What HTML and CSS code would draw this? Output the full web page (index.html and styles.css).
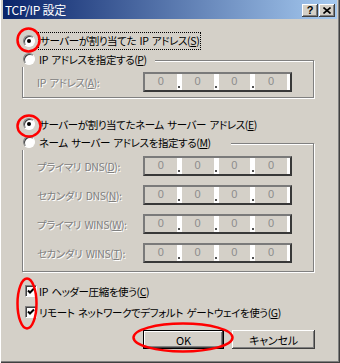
FILE: index.html
```html
<!DOCTYPE html>
<html>
<head>
    <meta charset="utf-8">
    <title>TCP/IP 設定</title>
    <link rel="stylesheet" href="styles.css">
</head>
<body>
    <div class="window">
        <div class="titlebar">
            <span class="title">TCP/IP 設定</span>
            <div class="caption-btns">
                <span class="cap-btn">?</span>
                <span class="cap-btn">
                    <svg width="8" height="7" viewBox="0 0 8 7"><path d="M0.5 0.5 L7.5 6.5 M7.5 0.5 L0.5 6.5" stroke="#000" stroke-width="1.6" fill="none"/></svg>
                </span>
            </div>
        </div>

        <div class="content">
            <div class="opt opt-first">
                <span class="radio on"></span>
                <span class="focus">サーバーが割り当てた IP アドレス(<u>S</u>)</span>
            </div>

            <div class="group group-ip">
                <div class="opt legend">
                    <span class="radio"></span>
                    <span>IP アドレスを指定する(<u>P</u>)</span>
                </div>
                <div class="field-row first">
                    <span class="lbl">IP アドレス(<u>A</u>):</span>
                    <div class="ipbox"><span class="oct">0</span><span class="dot"></span><span class="oct">0</span><span class="dot"></span><span class="oct">0</span><span class="dot"></span><span class="oct">0</span><span class="tail"></span></div>
                </div>
            </div>

            <div class="opt opt-dns">
                <span class="radio on"></span>
                <span>サーバーが割り当てたネーム サーバー アドレス(<u>E</u>)</span>
            </div>

            <div class="group group-dns">
                <div class="opt legend wide">
                    <span class="radio"></span>
                    <span>ネーム サーバー アドレスを指定する(<u>M</u>)</span>
                </div>
                <div class="field-row first-dns">
                    <span class="lbl">プライマリ DNS(<u>D</u>):</span>
                    <div class="ipbox"><span class="oct">0</span><span class="dot"></span><span class="oct">0</span><span class="dot"></span><span class="oct">0</span><span class="dot"></span><span class="oct">0</span><span class="tail"></span></div>
                </div>
                <div class="field-row">
                    <span class="lbl">セカンダリ DNS(<u>N</u>):</span>
                    <div class="ipbox"><span class="oct">0</span><span class="dot"></span><span class="oct">0</span><span class="dot"></span><span class="oct">0</span><span class="dot"></span><span class="oct">0</span><span class="tail"></span></div>
                </div>
                <div class="field-row">
                    <span class="lbl">プライマリ WINS(<u>W</u>):</span>
                    <div class="ipbox"><span class="oct">0</span><span class="dot"></span><span class="oct">0</span><span class="dot"></span><span class="oct">0</span><span class="dot"></span><span class="oct">0</span><span class="tail"></span></div>
                </div>
                <div class="field-row">
                    <span class="lbl">セカンダリ WINS(<u>T</u>):</span>
                    <div class="ipbox"><span class="oct">0</span><span class="dot"></span><span class="oct">0</span><span class="dot"></span><span class="oct">0</span><span class="dot"></span><span class="oct">0</span><span class="tail"></span></div>
                </div>
            </div>

            <div class="checks">
                <div class="chk-row">
                    <span class="check"><svg width="8" height="8" viewBox="0 0 8 8"><path d="M1 3.5 L3 5.5 L7 1.5" stroke="#000" stroke-width="2" fill="none"/></svg></span>
                    <span>IP ヘッダー圧縮を使う(<u>C</u>)</span>
                </div>
                <div class="chk-row">
                    <span class="check"><svg width="8" height="8" viewBox="0 0 8 8"><path d="M1 3.5 L3 5.5 L7 1.5" stroke="#000" stroke-width="2" fill="none"/></svg></span>
                    <span>リモート ネットワークでデフォルト ゲートウェイを使う(<u>G</u>)</span>
                </div>
            </div>

            <div class="buttons">
                <button class="btn default">OK</button>
                <button class="btn cancel">キャンセル</button>
            </div>
        </div>

        <!-- red annotation marks drawn over the dialog -->
        <svg class="marks" width="340" height="363" viewBox="0 0 340 363">
            <ellipse cx="28.5" cy="40" rx="11" ry="11.5"/>
            <ellipse cx="29" cy="126" rx="11.5" ry="10.5"/>
            <ellipse cx="27" cy="303.5" rx="9.5" ry="25"/>
            <ellipse cx="183" cy="337.5" rx="49.5" ry="14"/>
        </svg>
    </div>
</body>
</html>
```

FILE: styles.css
```css
body {
    margin: 0;
    font-family: "Noto Sans CJK JP", sans-serif;
    font-size: 10.5px;
    letter-spacing: -0.4px;
    word-spacing: 1.5px;
    font-feature-settings: "palt";
    white-space: nowrap;
    color: #000;
}
.window {
    position: relative;
    width: 340px;
    height: 363px;
    box-sizing: border-box;
    padding: 0 3px 3px;
    background: #d4d0c8;
    box-shadow: inset 1px 0 0 #fff, inset -1px -1px 0 #404040, inset -2px -2px 0 #808080;
}
.titlebar {
    height: 19px;
    display: flex;
    align-items: center;
    justify-content: space-between;
    padding: 0 2px 0 2px;
    background: linear-gradient(to right, #0a246a, #a6caf0);
}
.title {
    color: #fff;
    font-size: 12px;
    line-height: 19px;
    letter-spacing: -0.3px;
    word-spacing: 0;
}
.caption-btns {
    display: flex;
    gap: 1px;
    padding-top: 1px;
}
.cap-btn {
    width: 16px;
    height: 13px;
    box-sizing: border-box;
    display: flex;
    align-items: center;
    justify-content: center;
    background: #d4d0c8;
    font-family: "Liberation Sans", sans-serif;
    font-weight: bold;
    font-size: 11px;
    letter-spacing: 0;
    box-shadow: inset -1px -1px 0 #404040, inset 1px 1px 0 #fff, inset -2px -2px 0 #808080;
}
.content {
    padding: 14px 23px 0 19px;
}
.opt {
    display: flex;
    align-items: center;
    gap: 4px;
    height: 16px;
    padding-left: 1px;
}
.radio {
    position: relative;
    width: 12px;
    height: 12px;
    box-sizing: border-box;
    border-radius: 50%;
    background: #fff;
    border: 1px solid;
    border-color: #808080 #fff #fff #808080;
    box-shadow: inset 1px 1px 0 #404040;
    flex: none;
}
.radio.on::after {
    content: "";
    position: absolute;
    left: 3px;
    top: 3px;
    width: 4px;
    height: 4px;
    border-radius: 50%;
    background: #000;
}
.focus {
    outline: 1px dotted #000;
    padding: 0 1px;
    line-height: 16px;
}
.group {
    border: 1px solid #808080;
    box-shadow: inset 1px 1px 0 #fff, 1px 1px 0 #fff;
    padding: 0 0 5px 14px;
}
.legend {
    width: fit-content;
    margin: -10px 0 0 -15px;
    padding-right: 8px;
    background: #d4d0c8;
}
.legend.wide {
    padding-right: 20px;
}
.group-ip {
    margin-top: 11px;
}
.group-dns {
    margin-top: 11px;
    padding-bottom: 8px;
}
.opt-dns {
    margin-top: 18px;
}
.field-row {
    display: flex;
    align-items: center;
    margin-top: 9px;
}
.field-row.first {
    margin-top: 5px;
}
.field-row.first-dns {
    margin-top: 6px;
}
.lbl {
    width: 106px;
    color: #808080;
    text-shadow: 1px 1px 0 #fff;
}
.ipbox {
    display: flex;
    width: 149px;
    height: 20px;
    box-sizing: border-box;
    border: 2px solid;
    border-color: #7a7a7a #383838 #383838 #7a7a7a;
    background: #d4d0c8;
}
.oct {
    flex: 1;
    text-align: center;
    color: #8c8c8c;
    font-family: "Liberation Sans", sans-serif;
    font-size: 11px;
    letter-spacing: 0;
    line-height: 14px;
}
.dot {
    width: 5px;
    display: flex;
    align-items: flex-end;
    justify-content: center;
    padding-bottom: 2px;
    box-sizing: border-box;
    background: #fff;
}
.dot::after {
    content: "";
    width: 2px;
    height: 2px;
    background: #505050;
}
.tail {
    width: 3px;
    background: #fff;
}
.checks {
    margin-top: 11px;
    display: flex;
    flex-direction: column;
    gap: 5px;
}
.chk-row {
    display: flex;
    align-items: center;
    gap: 2px;
    height: 16px;
    padding-left: 3px;
}
.check {
    width: 12px;
    height: 12px;
    box-sizing: border-box;
    display: flex;
    align-items: center;
    justify-content: center;
    background: #fff;
    border: 1px solid;
    border-color: #808080 #fff #fff #808080;
    box-shadow: inset 1px 1px 0 #404040;
    flex: none;
}
.buttons {
    display: flex;
    justify-content: flex-end;
    gap: 8px;
    margin: 10px -1px 0 0;
}
.btn {
    height: 19px;
    box-sizing: border-box;
    padding: 0;
    border: none;
    background: #d4d0c8;
    font-family: "Noto Sans CJK JP", sans-serif;
    font-size: 11px;
    letter-spacing: -0.2px;
    font-feature-settings: "palt";
    color: #000;
    box-shadow: inset -1px -1px 0 #404040, inset 1px 1px 0 #fff, inset -2px -2px 0 #808080;
}
.btn.default {
    width: 81px;
    border: 1px solid #000;
}
.btn.cancel {
    width: 83px;
}
.marks {
    position: absolute;
    left: 0;
    top: 0;
    pointer-events: none;
}
.marks ellipse {
    fill: none;
    stroke: #f00;
    stroke-width: 2.5;
}
```
